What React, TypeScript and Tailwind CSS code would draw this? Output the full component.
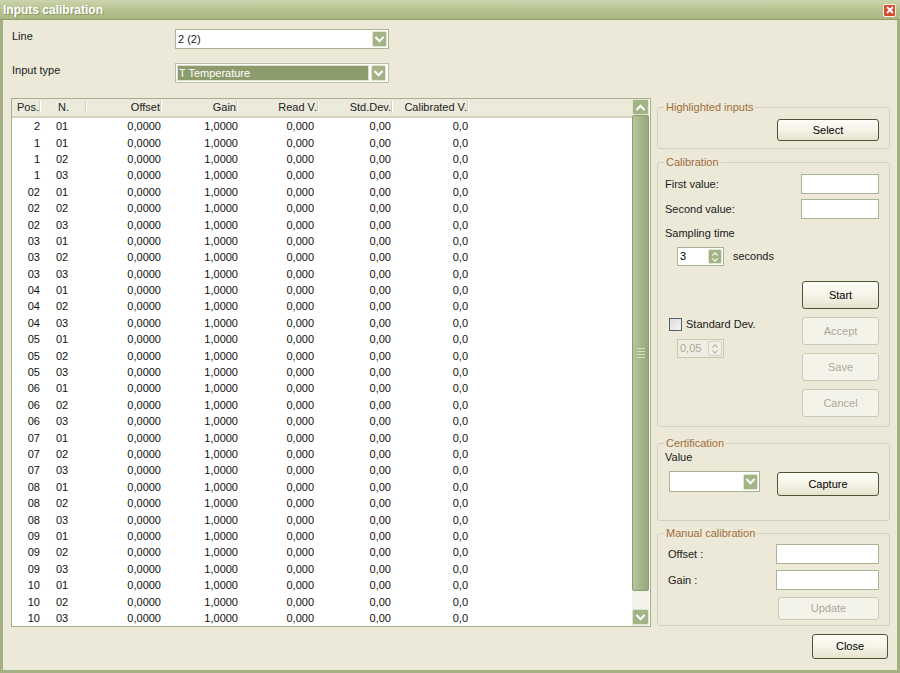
import React from "react";

const Chevron = ({ up = false, color = "#ffffff", size = 9, sw = 1.8 }: { up?: boolean; color?: string; size?: number; sw?: number }) => (
  <svg width={size} height={size} viewBox="0 0 8 8">
    <path d={up ? "M1 5.6 L4 2.4 L7 5.6" : "M1 2.4 L4 5.6 L7 2.4"} stroke={color} strokeWidth={sw} fill="none" strokeLinecap="square" />
  </svg>
);

const DropBtn = () => (
  <div className="w-[15px] h-[16px] mr-[1px] rounded-[2px] bg-[#a2b385] border border-[#dfe5cf] flex items-center justify-center">
    <Chevron />
  </div>
);

function Btn({ children, disabled = false, className = "" }: { children: React.ReactNode; disabled?: boolean; className?: string }) {
  const base = disabled
    ? "border-[#cbc8b6] bg-[#f4f3ea] text-[#aca899]"
    : "border-[#4b5636] bg-linear-to-b from-[#fefdf7] via-[#f6f4e8] to-[#e6e2cd] text-black";
  return <div className={`flex items-center justify-center border rounded-[3px] ${base} ${className}`}>{children}</div>;
}

function Group({ title, className, children }: { title: string; className: string; children: React.ReactNode }) {
  return (
    <div className={`relative border border-[#d3d0bf] rounded-[3px] ${className}`}>
      <span className="absolute -top-[7px] left-[6px] px-[2px] bg-[#ece9d8] text-[#a26c3c] leading-[13px]">{title}</span>
      {children}
    </div>
  );
}

const TextBox = ({ className }: { className: string }) => <div className={`bg-white border border-[#a9b592] ${className}`} />;

function Spin({ value, disabled = false }: { value: string; disabled?: boolean }) {
  return (
    <div
      className={`w-[47px] h-[19px] flex items-center border ${disabled ? "border-[#c9c6b4] bg-[#efede2] text-[#aca899]" : "border-[#a9b592] bg-white text-black"}`}
    >
      <span className="flex-1 pl-[2px] leading-none">{value}</span>
      <div
        className={`w-[14px] h-[15px] mr-[1px] rounded-[2px] flex flex-col items-center justify-center ${disabled ? "bg-[#f1efe6] border border-[#d6d3c4]" : "bg-[#a2b385] border border-[#dfe5cf]"}`}
      >
        <Chevron up size={6} sw={1.4} color={disabled ? "#b8b5a6" : "#ffffff"} />
        <Chevron size={6} sw={1.4} color={disabled ? "#b8b5a6" : "#ffffff"} />
      </div>
    </div>
  );
}

const rows: [string, string][] = [["2", "01"], ["1", "01"], ["1", "02"], ["1", "03"]];
for (let p = 2; p <= 10; p++) {
  for (let n = 1; n <= 3; n++) rows.push([String(p).padStart(2, "0"), "0" + n]);
}

function HeaderCell({ label, className, align = "right" }: { label: string; className: string; align?: "left" | "right" }) {
  return (
    <div className={`h-full flex items-center ${className}`}>
      <span className={`flex-1 ${align === "right" ? "text-right" : "text-left"}`}>{label}</span>
      <div className="w-[1px] h-[12px] bg-[#d2cebd] border-r border-white box-content" />
    </div>
  );
}

export default function App() {
  return (
    <div className="w-[900px] h-[673px] flex flex-col bg-[#ece9d8] font-['Liberation_Sans',Arial,sans-serif] text-[11px] text-[#1a1a1a] overflow-hidden">
      {/* Title bar */}
      <div className="h-[20px] shrink-0 flex items-center justify-between bg-linear-to-b from-[#ccd4ad] via-[#b8c391] to-[#abb783] border-b border-[#8f9d6b]">
        <span className="pl-[3px] text-white font-bold text-[12px] [text-shadow:1px_1px_0_#8a976a]">Inputs calibration</span>
        <div className="mr-[4px] mt-[1px] w-[13px] h-[13px] bg-[#d34b2c] border border-[#fbeee8] rounded-[2px] flex items-center justify-center">
          <svg width="8" height="8" viewBox="0 0 8 8">
            <path d="M1 1 L7 7 M7 1 L1 7" stroke="#ffffff" strokeWidth="1.8" />
          </svg>
        </div>
      </div>

      {/* Body */}
      <div className="flex-1 flex flex-col border-x-[3px] border-b-[3px] border-[#a3b084] pl-[8px] pr-[7px]">
        <div className="mt-[9px] flex items-start h-[20px]">
          <span className="w-[164px] pl-[1px] leading-[13px] pt-[1px]">Line</span>
          <div className="w-[214px] h-[20px] bg-white border border-[#a9b592] flex items-center">
            <span className="flex-1 pl-[2px] leading-none">2 (2)</span>
            <DropBtn />
          </div>
        </div>
        <div className="mt-[14px] flex items-start h-[20px]">
          <span className="w-[164px] pl-[1px] leading-[13px] pt-[1px]">Input type</span>
          <div className="w-[214px] h-[20px] bg-white border border-[#b7c0a3] flex items-center p-[1px]">
            <div className="flex-1 h-full bg-[#8d9c6c] border border-[#d9dfc9] flex items-center mr-[2px]">
              <span className="pl-[1px] text-white leading-none">T Temperature</span>
            </div>
            <DropBtn />
          </div>
        </div>

        <div className="mt-[15px] flex h-[529px]">
          {/* List */}
          <div className="w-[640px] h-full border border-[#a4b08c] bg-white flex">
            <div className="flex-1 flex flex-col">
              <div className="h-[19px] flex bg-[#ebeadb] border-b-[2px] border-[#d6d2c2] text-[#222]">
                <HeaderCell label="Pos." className="w-[36px] pr-[7px]" />
                <HeaderCell label="N." className="w-[39px] pl-[10px]" align="left" />
                <HeaderCell label="Offset" className="w-[79px] pr-[4px]" />
                <HeaderCell label="Gain" className="w-[77px] pr-[5px]" />
                <HeaderCell label="Read V." className="w-[78px] pr-[2px]" />
                <HeaderCell label="Std.Dev." className="w-[75px] pr-[3px]" />
                <HeaderCell label="Calibrated V." className="w-[78px] pr-[5px]" />
              </div>
              <div className="flex flex-col pt-[1px]">
                {rows.map(([p, n], i) => (
                  <div key={i} className="h-[16.4px] flex items-center leading-none text-[#111]">
                    <span className="w-[36px] text-right pr-[8px]">{p}</span>
                    <span className="w-[39px] pl-[8px]">{n}</span>
                    <span className="w-[79px] text-right pr-[5px]">0,0000</span>
                    <span className="w-[77px] text-right pr-[5px]">1,0000</span>
                    <span className="w-[78px] text-right pr-[7px]">0,000</span>
                    <span className="w-[75px] text-right pr-[5px]">0,00</span>
                    <span className="w-[78px] text-right pr-[6px]">0,0</span>
                  </div>
                ))}
              </div>
            </div>
            {/* Scrollbar */}
            <div className="w-[17px] mr-[1px] flex flex-col bg-[#f3f2ea]">
              <div className="h-[16px] rounded-[2px] bg-[#a2b385] border border-[#dfe5cf] flex items-center justify-center">
                <Chevron up />
              </div>
              <div className="h-[476px] rounded-[2px] bg-linear-to-r from-[#b9c69e] via-[#a7b68a] to-[#97a779] border border-[#8c9c6d] flex items-center justify-center">
                <div className="flex flex-col gap-[2px]">
                  <div className="w-[8px] h-[1px] bg-[#d6dec4]" />
                  <div className="w-[8px] h-[1px] bg-[#d6dec4]" />
                  <div className="w-[8px] h-[1px] bg-[#d6dec4]" />
                  <div className="w-[8px] h-[1px] bg-[#d6dec4]" />
                </div>
              </div>
              <div className="flex-1" />
              <div className="h-[16px] mb-[1px] rounded-[2px] bg-[#a2b385] border border-[#dfe5cf] flex items-center justify-center">
                <Chevron />
              </div>
            </div>
          </div>

          {/* Right panel */}
          <div className="ml-[6px] w-[233px] flex flex-col">
            <Group title="Highlighted inputs" className="mt-[9px] h-[42px]">
              <div className="flex justify-end pr-[10px] pt-[11px]">
                <Btn className="w-[102px] h-[22px]">Select</Btn>
              </div>
            </Group>

            <Group title="Calibration" className="mt-[13px] h-[265px]">
              <div className="flex flex-col pl-[7px] pr-[10px] pt-[11px]">
                <div className="h-[20px] flex items-center justify-between">
                  <span>First value:</span>
                  <TextBox className="w-[78px] h-[20px]" />
                </div>
                <div className="mt-[5px] h-[20px] flex items-center justify-between">
                  <span>Second value:</span>
                  <TextBox className="w-[78px] h-[20px]" />
                </div>
                <div className="mt-[8px] leading-[13px]">Sampling time</div>
                <div className="mt-[7px] ml-[12px] flex items-center">
                  <Spin value="3" />
                  <span className="ml-[9px]">seconds</span>
                </div>
                <div className="mt-[15px] flex justify-between">
                  <div className="flex flex-col pt-[37px]">
                    <div className="flex items-center ml-[4px]">
                      <div className="w-[13px] h-[13px] border border-[#4f6170] bg-linear-to-br from-[#dcdcd6] to-[#f6f6f2]" />
                      <span className="ml-[4px] leading-none">Standard Dev.</span>
                    </div>
                    <div className="mt-[8px] ml-[12px]">
                      <Spin value="0,05" disabled />
                    </div>
                  </div>
                  <div className="flex flex-col gap-[8px]">
                    <Btn className="w-[77px] h-[28px]">Start</Btn>
                    <Btn disabled className="w-[77px] h-[28px]">Accept</Btn>
                    <Btn disabled className="w-[77px] h-[28px]">Save</Btn>
                    <Btn disabled className="w-[77px] h-[28px]">Cancel</Btn>
                  </div>
                </div>
              </div>
            </Group>

            <Group title="Certification" className="mt-[16px] h-[78px]">
              <div className="flex flex-col pl-[7px] pr-[10px] pt-[7px]">
                <span className="leading-[13px]">Value</span>
                <div className="mt-[7px] flex justify-between items-start">
                  <div className="ml-[4px] w-[91px] h-[21px] bg-white border border-[#a9b592] flex items-center justify-end">
                    <DropBtn />
                  </div>
                  <Btn className="mt-[1px] w-[102px] h-[24px]">Capture</Btn>
                </div>
              </div>
            </Group>

            <Group title="Manual calibration" className="mt-[12px] h-[93px]">
              <div className="flex flex-col pl-[10px] pr-[10px] pt-[10px]">
                <div className="h-[20px] flex items-center justify-between">
                  <span>Offset :</span>
                  <TextBox className="w-[103px] h-[20px]" />
                </div>
                <div className="mt-[6px] h-[20px] flex items-center justify-between">
                  <span>Gain :</span>
                  <TextBox className="w-[103px] h-[20px]" />
                </div>
                <div className="mt-[7px] flex justify-end">
                  <Btn disabled className="w-[101px] h-[23px]">Update</Btn>
                </div>
              </div>
            </Group>
          </div>
        </div>

        <div className="mt-[7px] flex justify-end pr-[2px]">
          <Btn className="w-[76px] h-[25px]">Close</Btn>
        </div>
      </div>
    </div>
  );
}
